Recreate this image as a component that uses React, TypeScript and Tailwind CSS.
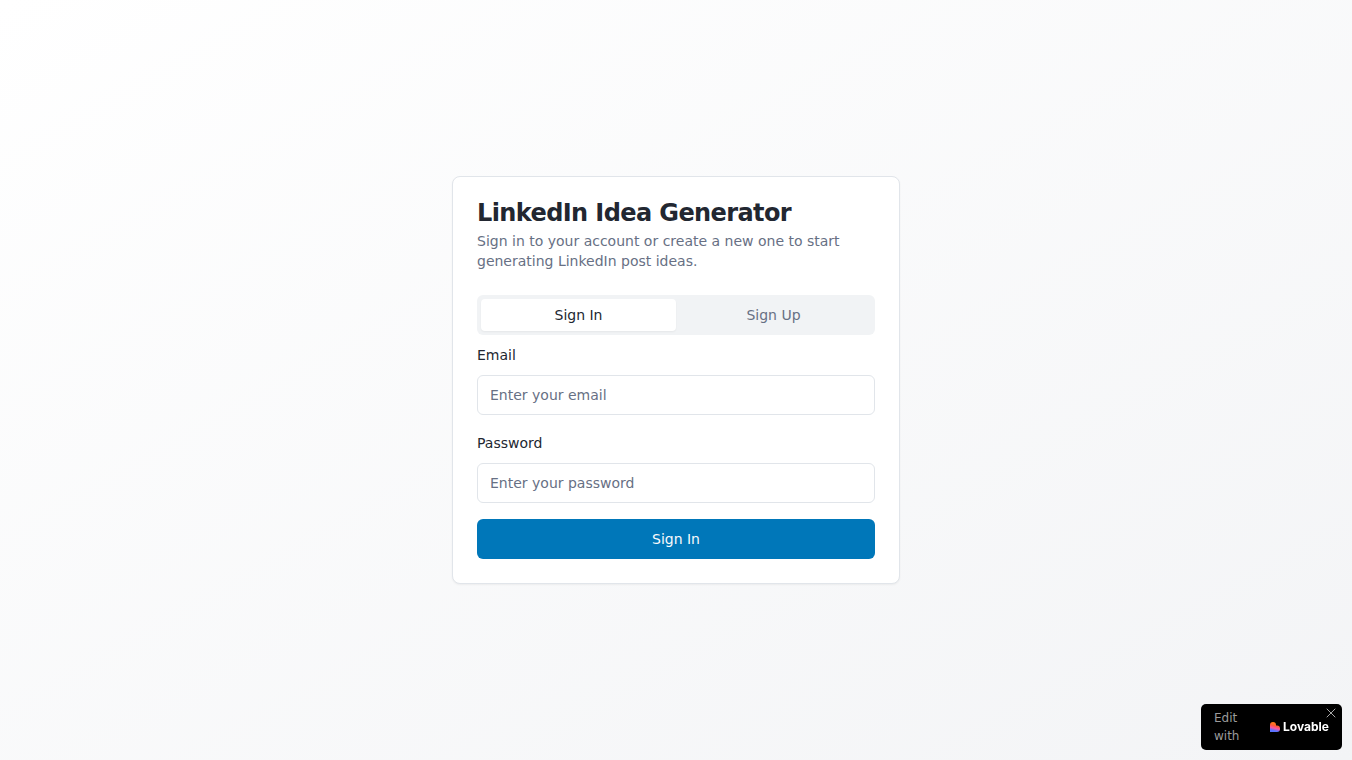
import { useState } from 'react'
import { X } from 'lucide-react'

const tabs = ['Sign In', 'Sign Up']

const fields = [
  { id: 'email', label: 'Email', type: 'email', placeholder: 'Enter your email' },
  { id: 'password', label: 'Password', type: 'password', placeholder: 'Enter your password' },
]

function LovableMark() {
  return (
    <svg viewBox="0 0 20 20" className="h-[10px] w-[10px] shrink-0" aria-hidden="true">
      <defs>
        <linearGradient id="heart" x1="0.6" y1="0" x2="0.35" y2="1">
          <stop offset="0.15" stopColor="#ff7a1a" />
          <stop offset="0.4" stopColor="#ff5a3c" />
          <stop offset="0.62" stopColor="#f556a8" />
          <stop offset="0.85" stopColor="#5a73ff" />
        </linearGradient>
      </defs>
      <path
        fill="url(#heart)"
        d="M6 0a6 6 0 0 1 6 6v1h2a6 6 0 0 1 6 6v1a6 6 0 0 1-6 6H0V6a6 6 0 0 1 6-6Z"
      />
    </svg>
  )
}

function EditBadge({ onClose }: { onClose: () => void }) {
  return (
    <aside className="fixed right-[10px] bottom-[10px] rounded-[5px] bg-black">
      <a href="#edit" className="flex w-[141px] items-center justify-between px-[13px] py-[5px]">
        <span className="w-8 text-xs leading-[18px] text-[#9b9b9b]">Edit with</span>
        <span className="flex items-center gap-[3px]">
          <LovableMark />
          <span className="font-[Inter,sans-serif] text-xs leading-4 font-bold text-white">Lovable</span>
        </span>
      </a>
      <button
        type="button"
        aria-label="Close"
        onClick={onClose}
        className="absolute top-px right-[3px] text-[#a8a8a8]"
      >
        <X className="h-4 w-4" strokeWidth={1.5} />
      </button>
    </aside>
  )
}

export default function App() {
  const [active, setActive] = useState('Sign In')
  const [showBadge, setShowBadge] = useState(true)

  return (
    <div className="flex min-h-screen items-center justify-center bg-linear-to-br/srgb from-white to-[#f3f4f6] p-4 font-['DejaVu_Sans',sans-serif] text-[#222731]">
      <main className="w-full max-w-md rounded-lg border border-[#e1e5ea] bg-white shadow-xs">
        {/* Header */}
        <div className="flex flex-col gap-1.5 p-6">
          <h1 className="text-2xl leading-none font-semibold tracking-tight">LinkedIn Idea Generator</h1>
          <p className="text-sm text-[#677084]">
            Sign in to your account or create a new one to start generating LinkedIn post ideas.
          </p>
        </div>

        <div className="px-6 pb-6">
          {/* Tabs */}
          <div role="tablist" className="grid h-10 grid-cols-2 rounded-md bg-[#f1f3f5] p-1">
            {tabs.map((tab) => (
              <button
                key={tab}
                type="button"
                role="tab"
                aria-selected={active === tab}
                onClick={() => setActive(tab)}
                className={
                  active === tab
                    ? 'rounded-sm bg-white text-sm font-medium shadow-xs'
                    : 'rounded-sm text-sm font-medium text-[#677084]'
                }
              >
                {tab}
              </button>
            ))}
          </div>

          {/* Form */}
          <form className="mt-2 flex flex-col gap-4" onSubmit={(e) => e.preventDefault()}>
            {fields.map((field) => (
              <div key={field.id} className="flex flex-col gap-2">
                <label htmlFor={field.id} className="text-sm leading-6 font-medium">
                  {field.label}
                </label>
                <input
                  id={field.id}
                  type={field.type}
                  placeholder={field.placeholder}
                  className="h-10 w-full rounded-md border border-[#e1e5ea] bg-white px-3 text-sm placeholder:text-[#677084]"
                />
              </div>
            ))}
            <button
              type="submit"
              className="h-10 w-full rounded-md bg-[#0077b9] text-sm font-medium text-[#f8fafc] hover:bg-[#006aa6]"
            >
              {active}
            </button>
          </form>
        </div>
      </main>

      {showBadge && <EditBadge onClose={() => setShowBadge(false)} />}
    </div>
  )
}
